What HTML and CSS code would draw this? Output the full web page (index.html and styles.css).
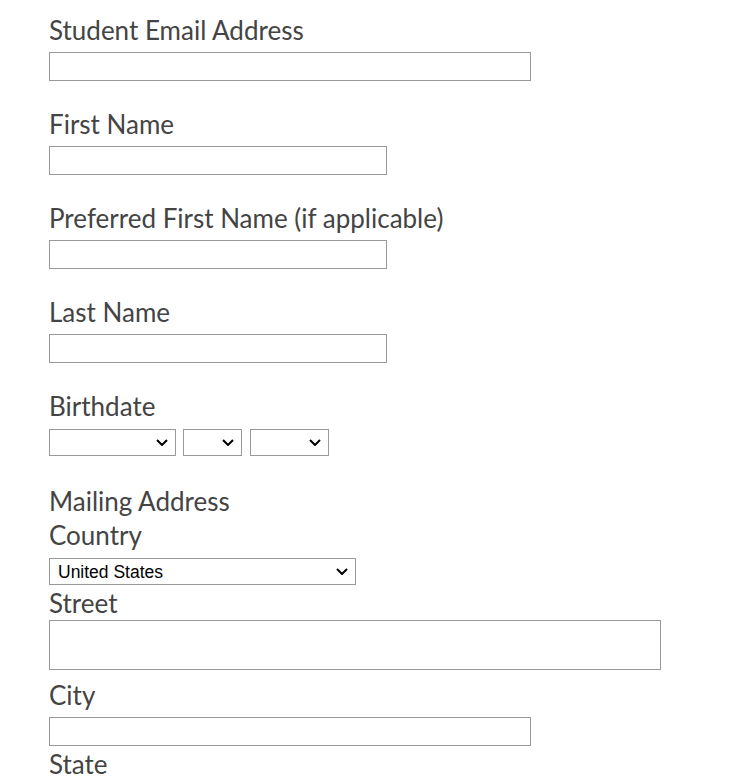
FILE: index.html
```html
<!DOCTYPE html>
<html lang="en">
<head>
<meta charset="utf-8">
<title>Student Form</title>
<link rel="stylesheet" href="styles.css">
</head>
<body>
<form class="form">
  <div class="group">
    <label class="label" for="email">Student Email Address</label>
    <input class="field field-wide" id="email" type="text">
  </div>
  <div class="group">
    <label class="label" for="first">First Name</label>
    <input class="field field-mid" id="first" type="text">
  </div>
  <div class="group">
    <label class="label" for="pref">Preferred First Name (if applicable)</label>
    <input class="field field-mid" id="pref" type="text">
  </div>
  <div class="group">
    <label class="label" for="last">Last Name</label>
    <input class="field field-mid" id="last" type="text">
  </div>
  <div class="group group-date">
    <label class="label" for="month">Birthdate</label>
    <div class="date-row">
      <span class="sel-wrap sel-month">
        <select class="sel" id="month"><option></option></select>
        <svg class="chev" viewBox="0 0 12 7" aria-hidden="true"><path d="M1 1 L6 6 L11 1" /></svg>
      </span>
      <span class="sel-wrap sel-day">
        <select class="sel"><option></option></select>
        <svg class="chev" viewBox="0 0 12 7" aria-hidden="true"><path d="M1 1 L6 6 L11 1" /></svg>
      </span>
      <span class="sel-wrap sel-year">
        <select class="sel"><option></option></select>
        <svg class="chev" viewBox="0 0 12 7" aria-hidden="true"><path d="M1 1 L6 6 L11 1" /></svg>
      </span>
    </div>
  </div>
  <div class="address">
    <div class="label">Mailing Address</div>
    <label class="label" for="country">Country</label>
    <span class="sel-wrap sel-country">
      <select class="sel" id="country"><option>United States</option></select>
      <svg class="chev" viewBox="0 0 12 7" aria-hidden="true"><path d="M1 1 L6 6 L11 1" /></svg>
    </span>
    <label class="label" for="street">Street</label>
    <textarea class="area" id="street"></textarea>
    <label class="label label-gap" for="city">City</label>
    <input class="field field-wide field-city" id="city" type="text">
    <label class="label" for="state">State</label>
  </div>
</form>
</body>
</html>
```
FILE: styles.css
```css
html, body {
  margin: 0;
  padding: 0;
  background: #fff;
}
body {
  padding: 12px 0 0 49px;
  font-family: Lato, "Open Sans", sans-serif;
  color: #444;
}
.form {
  display: block;
}
.group {
  display: flex;
  flex-direction: column;
  align-items: flex-start;
  margin-bottom: 25px;
}
.group-date {
  margin-bottom: 27px;
}
.label {
  display: block;
  font-size: 26px;
  line-height: 36px;
  height: 34px;
  color: #444;
}
.group .label {
  margin-bottom: 6px;
}
.field {
  box-sizing: border-box;
  height: 29px;
  border: 1px solid #999;
  border-radius: 0;
  padding: 0 4px;
  margin: 0;
  background: #fff;
  display: block;
}
.field-wide { width: 482px; }
.field-mid { width: 338px; }
.date-row {
  display: flex;
  margin-top: 1px;
}
.sel-wrap {
  position: relative;
  display: block;
  height: 27px;
}
.sel {
  -webkit-appearance: none;
  appearance: none;
  box-sizing: border-box;
  width: 100%;
  height: 27px;
  border: 1px solid #999;
  border-radius: 0;
  background: #fff;
  margin: 0;
  padding: 0 24px 0 8px;
  font-family: "Liberation Sans", Arial, sans-serif;
  font-size: 17.5px;
  color: #000;
  display: block;
}
.chev {
  position: absolute;
  right: 8px;
  top: 10px;
  width: 12px;
  height: 7px;
  fill: none;
  stroke: #000;
  stroke-width: 2;
  pointer-events: none;
}
.sel-month { width: 127px; margin-right: 7px; }
.sel-day { width: 59px; margin-right: 8px; }
.sel-year { width: 79px; }
.sel-country {
  width: 307px;
  margin-top: 7px;
}
.area {
  box-sizing: border-box;
  display: block;
  width: 612px;
  height: 50px;
  border: 1px solid #999;
  border-radius: 0;
  margin: 1px 0 0 0;
  resize: none;
}
.label-gap { margin-top: 7px; }
.field-city { margin-top: 6px; }
```
